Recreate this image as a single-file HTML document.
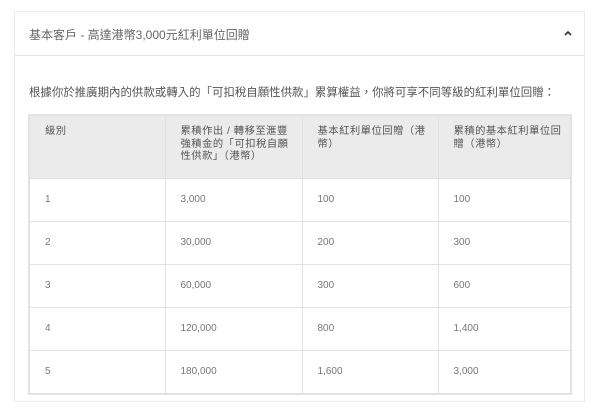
<!DOCTYPE html>
<html><head><meta charset="utf-8"><style>
html,body{margin:0;padding:0;background:#fff;width:600px;height:415px;overflow:hidden}
body{font-family:"Liberation Sans","Noto Sans CJK TC",sans-serif;color:#666}
.box{position:absolute;left:14px;top:11px;width:571px;height:391px;border:1px solid #ececec;box-sizing:border-box}
.hd{position:absolute;left:0;top:0;right:0;height:43px;border-bottom:1px solid #e6e6e6}
.hd span{position:absolute;left:14px;top:14px;font-size:12px;color:#666}
.chev{position:absolute;left:548px;top:17px}
.p{position:absolute;left:14px;top:72px;font-size:11.45px;color:#555;white-space:nowrap}
table{position:absolute;left:13px;top:102px;width:544px;table-layout:fixed;border-collapse:collapse;border:2px solid #e2e2e2;font-size:10px;color:#777}
td,th{border:1px solid #e2e2e2;text-align:left;vertical-align:top;padding:0 15px}
th{background:#ebebeb;font-weight:normal;color:#555;height:63px;padding:10px 10px 0 15px;box-sizing:border-box;line-height:12.5px;letter-spacing:0.5px;font-size:10.3px;white-space:nowrap}
td{height:42px;vertical-align:middle}
</style></head><body>
<div class="box">
<div class="hd"><span>基本客戶 - 高達港幣3,000元紅利單位回贈</span>
<svg class="chev" width="10" height="8" viewBox="0 0 10 8"><path d="M2 6 L5 3 L8 6" fill="none" stroke="#333" stroke-width="1.6"/></svg></div>
<div class="p">根據你於推廣期內的供款或轉入的「可扣稅自願性供款」累算權益，你將可享不同等級的紅利單位回贈：</div>
<table>
<tr><th style="width:136px">級別</th><th style="width:137px">累積作出 / 轉移至滙豐<br>強積金的「可扣稅自願<br>性供款」（港幣）</th><th style="width:136px">基本紅利單位回贈（港<br>幣）</th><th>累積的基本紅利單位回<br>贈（港幣）</th></tr>
<tr><td>1</td><td>3,000</td><td>100</td><td>100</td></tr>
<tr><td>2</td><td>30,000</td><td>200</td><td>300</td></tr>
<tr><td>3</td><td>60,000</td><td>300</td><td>600</td></tr>
<tr><td>4</td><td>120,000</td><td>800</td><td>1,400</td></tr>
<tr><td>5</td><td>180,000</td><td>1,600</td><td>3,000</td></tr>
</table>
</div>
</body></html>
